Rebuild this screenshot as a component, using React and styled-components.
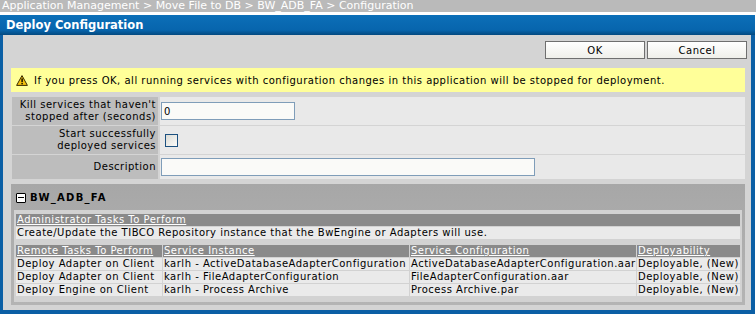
import styled, { createGlobalStyle } from "styled-components";

const Global = createGlobalStyle`
	html, body {
		margin: 0;
		padding: 0;
		background: #ffffff;
		font-family: "DejaVu Sans", Verdana, sans-serif;
		font-size: 10px;
		color: #000;
	}
`;

const Crumbs = styled.div`
	height: 12px;
	line-height: 12px;
	background: #bababa;
	color: #ffffff;
	font-size: 11px;
	padding-left: 2px;
	white-space: nowrap;
	overflow: hidden;
	margin-bottom: 3px;
`;

const Frame = styled.div`
	border: solid #0b5fa5;
	border-width: 0 4px 4px 3px;
	margin-right: 1px;
	background: #d4d4d4;
	height: 299px;
	box-sizing: border-box;
	display: flex;
	flex-direction: column;
	letter-spacing: 0.5px;
`;

const Title = styled.div`
	height: 20px;
	line-height: 20px;
	color: #ffffff;
	font-weight: bold;
	font-size: 11.5px;
	letter-spacing: 0;
	background: linear-gradient(#0c6fb8, #0765ad 75%, #03497f);
	margin-left: -3px;
	margin-right: -4px;
	padding-left: 6px;
`;

const Body = styled.div`
	padding: 6px 4px 0 8px;
	display: flex;
	flex-direction: column;
`;

const Buttons = styled.div`
	display: flex;
	justify-content: flex-end;
	gap: 2px;
`;

const Btn = styled.button`
	width: 100px;
	height: 18px;
	padding: 0;
	border: 1px solid #6f6f6f;
	background: linear-gradient(#ffffff, #efefea);
	font-family: inherit;
	font-size: 10px;
	letter-spacing: 0.5px;
	color: #000;
`;

const Warning = styled.div`
	margin: 9px 2px 0 0;
	height: 24px;
	background: #ffff99;
	display: flex;
	align-items: center;
	gap: 6px;
	padding-left: 5px;
`;

const FormTable = styled.div`
	margin: 5px 2px 0 1px;
	display: grid;
	grid-template-columns: 146px 1fr;
	column-gap: 2px;
	row-gap: 1px;
`;

const Label = styled.div`
	background: #bdbdbd;
	height: ${(p) => p.h}px;
	display: flex;
	align-items: center;
	justify-content: flex-end;
	text-align: right;
	padding-right: 2px;
	line-height: 12px;
	white-space: nowrap;
`;

const Value = styled.div`
	background: #e9e9e9;
	height: ${(p) => p.h}px;
	display: flex;
	align-items: center;
	padding-left: ${(p) => p.pad || 1}px;
`;

const Input = styled.input`
	width: ${(p) => p.w}px;
	height: 18px;
	box-sizing: border-box;
	border: 1px solid #7f9db9;
	background: #fafaf8;
	font-family: inherit;
	font-size: 10px;
	padding: 0 2px;
	margin: 0;
	outline: none;
`;

const Check = styled.span`
	display: block;
	width: 13px;
	height: 13px;
	box-sizing: border-box;
	border: 1px solid #1c5180;
	background: linear-gradient(135deg, #dcdcd6, #fbfbf9);
`;

const Section = styled.div`
	margin: 5px 2px 0 0;
	background: linear-gradient(#a7a7a7, #b4b4b4);
	padding: 0 3px 3px 3px;
	height: 121px;
	box-sizing: border-box;
`;

const SectionHead = styled.div`
	height: 26px;
	display: flex;
	align-items: center;
	gap: 4px;
	padding: 1px 0 0 2px;
	font-weight: bold;
	font-size: 10px;
	letter-spacing: 1.3px;
	box-sizing: border-box;
`;

const Toggle = styled.span`
	width: 10px;
	height: 10px;
	box-sizing: border-box;
	border: 1px solid #000;
	border-radius: 1px;
	background: #fff;
	display: flex;
	align-items: center;
	justify-content: center;
	&::after {
		content: "";
		width: 6px;
		height: 1px;
		background: #000;
	}
`;

const Inner = styled.div`
	background: #d2d2d2;
	padding: 4px 2px 0 2px;
	height: 92px;
	box-sizing: border-box;
`;

const Grid = styled.div`
	display: grid;
	grid-template-columns: ${(p) => p.cols};
	column-gap: 1px;
	row-gap: 1px;
	margin-bottom: ${(p) => p.mb || 0}px;
	white-space: nowrap;
`;

const Th = styled.div`
	background: #8a8a8a;
	color: #ffffff;
	height: 12px;
	line-height: 12px;
	padding-left: 1px;
	overflow: hidden;
	span {
		text-decoration: underline;
	}
`;

const Td = styled.div`
	background: #eaeaea;
	height: 12px;
	line-height: 12px;
	padding-left: 1px;
	overflow: hidden;
`;

const WarnIcon = () => (
	<svg width="12" height="11" viewBox="0 0 12 11">
		<path d="M6 0.6 L11.4 10.4 H0.6 Z" fill="#f4c20d" stroke="#3a2a00" strokeWidth="1" strokeLinejoin="round" />
		<rect x="5.4" y="3.4" width="1.4" height="3.8" fill="#000" />
		<rect x="5.4" y="8" width="1.4" height="1.3" fill="#000" />
	</svg>
);

const tasks = [
	["Deploy Adapter on Client", "karlh - ActiveDatabaseAdapterConfiguration", "ActiveDatabaseAdapterConfiguration.aar", "Deployable, (New)"],
	["Deploy Adapter on Client", "karlh - FileAdapterConfiguration", "FileAdapterConfiguration.aar", "Deployable, (New)"],
	["Deploy Engine on Client", "karlh - Process Archive", "Process Archive.par", "Deployable, (New)"],
];

const taskCols = "146px 246px 226px 1fr";

function App() {
	return (
		<>
			<Global />
			<Crumbs>Application Management &gt; Move File to DB &gt; BW_ADB_FA &gt; Configuration</Crumbs>
			<Frame>
				<Title>Deploy Configuration</Title>
				<Body>
					<Buttons>
						<Btn>OK</Btn>
						<Btn>Cancel</Btn>
					</Buttons>
					<Warning>
						<WarnIcon />
						If you press OK, all running services with configuration changes in this application will be stopped for deployment.
					</Warning>
					<FormTable>
						<Label h={28}>
							Kill services that haven't
							<br />
							stopped after (seconds)
						</Label>
						<Value h={28}>
							<Input w={134} defaultValue="0" />
						</Value>
						<Label h={28}>
							Start successfully
							<br />
							deployed services
						</Label>
						<Value h={28} pad={5}>
							<Check />
						</Value>
						<Label h={24}>Description</Label>
						<Value h={24}>
							<Input w={374} />
						</Value>
					</FormTable>
					<Section>
						<SectionHead>
							<Toggle />
							BW_ADB_FA
						</SectionHead>
						<Inner>
							<Grid cols="1fr" mb={6}>
								<Th>
									<span>Administrator Tasks To Perform</span>
								</Th>
								<Td>Create/Update the TIBCO Repository instance that the BwEngine or Adapters will use.</Td>
							</Grid>
							<Grid cols={taskCols}>
								<Th>
									<span>Remote Tasks To Perform</span>
								</Th>
								<Th>
									<span>Service Instance</span>
								</Th>
								<Th>
									<span>Service Configuration</span>
								</Th>
								<Th>
									<span>Deployability</span>
								</Th>
								{tasks.map((row, i) =>
									row.map((cell, j) => (
										<Td key={i + "-" + j}>{cell}</Td>
									))
								)}
							</Grid>
						</Inner>
					</Section>
				</Body>
			</Frame>
		</>
	);
}

export default App;
